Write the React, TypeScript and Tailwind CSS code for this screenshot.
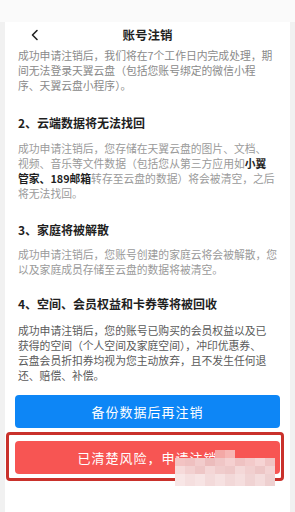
const mosaic: [number, number, number, number, string][] = [
  // x, y, w, h, colour (relative to the red button's top-left)
  [200, 9, 10, 8, "#f4a8a6"],
  [210, 9, 10, 8, "#f7b6b4"],
  [160, 17, 10, 8, "#f3c3c3"],
  [170, 17, 10, 8, "#efc0c0"],
  [180, 17, 10, 8, "#f2cccc"],
  [190, 17, 10, 8, "#ecbcbc"],
  [200, 17, 10, 8, "#f0c6c6"],
  [210, 17, 10, 8, "#f5d0d0"],
  [220, 17, 10, 8, "#efc2c2"],
  [230, 17, 10, 8, "#f3caca"],
  [240, 17, 10, 8, "#f6d4d4"],
  [250, 17, 10, 8, "#f0c4c4"],
  [160, 25, 10, 8, "#f6dada"],
  [170, 25, 10, 8, "#f2d0d0"],
  [180, 25, 10, 8, "#eec6c6"],
  [190, 25, 10, 8, "#f4d6d6"],
  [200, 25, 10, 8, "#f0cccc"],
  [210, 25, 10, 8, "#eec8c8"],
  [220, 25, 10, 8, "#f4d8d8"],
  [230, 25, 10, 8, "#f1cfcf"],
  [240, 25, 10, 8, "#edc6c6"],
  [250, 25, 10, 8, "#f3d3d3"],
  [160, 33, 10, 12, "#f8e6e6"],
  [170, 33, 10, 12, "#f5dfdf"],
  [180, 33, 10, 12, "#f7e4e4"],
  [190, 33, 10, 12, "#f3dada"],
  [200, 33, 10, 12, "#f6e1e1"],
  [210, 33, 10, 12, "#f2d8d8"],
  [220, 33, 10, 12, "#f5dede"],
  [230, 33, 10, 12, "#f0d3d3"],
  [240, 33, 10, 12, "#f4dcdc"],
  [250, 33, 10, 12, "#eed0d0"],
];

const Paragraph = ({
  lines,
  className,
}: {
  lines: React.ReactNode[];
  className: string;
}) => (
  <p className={`text-[10.8px] leading-[15px] whitespace-nowrap ${className}`}>
    {lines.map((l, i) => (
      <span key={i} className="block">
        {l}
      </span>
    ))}
  </p>
);

const Heading = ({ children, className }: { children: React.ReactNode; className: string }) => (
  <h3 className={`text-[12px] leading-[16px] font-bold text-[#1f1f1f] ${className}`}>
    {children}
  </h3>
);

export default function App() {
  return (
    <div className="w-[295px] h-[512px] overflow-hidden bg-[#fafafa] pt-[22px] font-['Noto_Sans_CJK_SC',sans-serif]">
      <div className="h-[490px] bg-[#f1f1f1] px-[5px]">
        <div className="h-full bg-white">
          {/* Header */}
          <div className="relative h-[26px] flex items-center justify-center">
            <svg
              className="absolute left-[25px] top-[7px]"
              width="10"
              height="12"
              viewBox="0 0 10 12"
              fill="none"
            >
              <path d="M7 1.5L2.5 6L7 10.5" stroke="#222" strokeWidth="1.6" strokeLinecap="round" strokeLinejoin="round" />
            </svg>
            <h1 className="text-[12.5px] font-bold text-[#1f1f1f]">账号注销</h1>
          </div>

          <div className="px-[13px]">
            <Paragraph
              className="text-[#8a8a8a]"
              lines={[
                "成功申请注销后，我们将在7个工作日内完成处理，期",
                "间无法登录天翼云盘（包括您账号绑定的微信小程",
                "序、天翼云盘小程序）。",
              ]}
            />

            <Heading className="mt-[22px]">2、云端数据将无法找回</Heading>
            <Paragraph
              className="mt-[10px] text-[#9a9a9a]"
              lines={[
                "成功申请注销后，您存储在天翼云盘的图片、文档、",
                <>
                  视频、音乐等文件数据（包括您从第三方应用如<b className="text-[#1f1f1f]">小翼</b>
                </>,
                <>
                  <b className="text-[#1f1f1f]">管家、189邮箱</b>转存至云盘的数据）将会被清空，之后
                </>,
                "将无法找回。",
              ]}
            />

            <Heading className="mt-[21px]">3、家庭将被解散</Heading>
            <Paragraph
              className="mt-[9px] text-[#9a9a9a]"
              lines={[
                "成功申请注销后，您账号创建的家庭云将会被解散，您",
                "以及家庭成员存储至云盘的数据将被清空。",
              ]}
            />

            <Heading className="mt-[19px]">4、空间、会员权益和卡券等将被回收</Heading>
            <Paragraph
              className="mt-[11px] text-[#5a5a5a]"
              lines={[
                "成功申请注销后，您的账号已购买的会员权益以及已",
                "获得的空间（个人空间及家庭空间），冲印优惠券、",
                "云盘会员折扣券均视为您主动放弃，且不发生任何退",
                "还、赔偿、补偿。",
              ]}
            />

            <div className="-mx-[3px] mt-[12px]">
              <button className="w-full h-[33px] rounded-[4px] bg-[#0d86f6] text-white text-[13px] tracking-[1px]">
                备份数据后再注销
              </button>

              <div className="relative mt-[13px]">
                <div className="absolute -left-[9px] -top-[9px] w-[278px] h-[49px] border-[3px] border-[#c9312b] rounded-[4px]" />
                <button className="w-full h-[33px] rounded-[4px] bg-[#f75553] text-white text-[13px] tracking-[1px]">
                  已清楚风险，申请注销
                </button>
                {mosaic.map(([x, y, w, h, c], i) => (
                  <div
                    key={i}
                    className="absolute"
                    style={{ left: x, top: y, width: w, height: h, background: c }}
                  />
                ))}
              </div>
            </div>
          </div>
        </div>
      </div>
    </div>
  );
}
